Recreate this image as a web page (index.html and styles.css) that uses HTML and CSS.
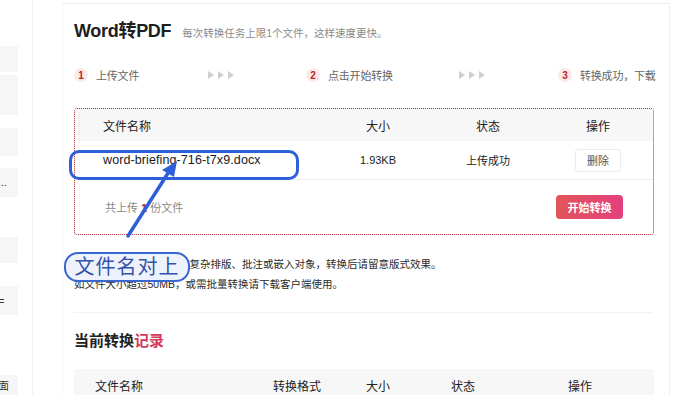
FILE: index.html
```html
<!DOCTYPE html>
<html lang="zh-CN">
<head>
<meta charset="utf-8">
<title>Word转PDF</title>
<link rel="stylesheet" href="styles.css">
</head>
<body>
<div class="page">
  <aside class="sidebar">
    <div class="sb-item sb-a"></div>
    <div class="sb-item sb-b"></div>
    <div class="sb-item sb-c"></div>
    <div class="sb-item sb-d"><span>...</span></div>
    <div class="sb-item sb-e"></div>
    <div class="sb-item sb-f"><span>=</span></div>
    <div class="sb-item sb-g"><span>面</span></div>
  </aside>
  <main class="card">
    <header class="head">
      <h1 class="title">Word转PDF</h1>
      <span class="subtitle">每次转换任务上限1个文件，这样速度更快。</span>
    </header>
    <div class="steps">
      <div class="step"><span class="num">1</span><span class="step-text">上传文件</span></div>
      <svg class="arrows" width="26" height="8" viewBox="0 0 26 8"><polygon points="0,0 6,4 0,8" /><polygon points="10,0 16,4 10,8" /><polygon points="20,0 26,4 20,8" /></svg>
      <div class="step"><span class="num">2</span><span class="step-text">点击开始转换</span></div>
      <svg class="arrows" width="26" height="8" viewBox="0 0 26 8"><polygon points="0,0 6,4 0,8" /><polygon points="10,0 16,4 10,8" /><polygon points="20,0 26,4 20,8" /></svg>
      <div class="step"><span class="num">3</span><span class="step-text">转换成功，下载</span></div>
    </div>
    <section class="upload">
      <div class="trow thead">
        <div class="c1">文件名称</div>
        <div class="cc">大小</div>
        <div class="cc">状态</div>
        <div class="cc">操作</div>
      </div>
      <div class="trow tbody">
        <div class="c1 fname">word-briefing-716-t7x9.docx</div>
        <div class="cc">1.93KB</div>
        <div class="cc">上传成功</div>
        <div class="cc"><button class="del">删除</button></div>
      </div>
      <div class="foot">
        <span class="count">共上传 <em>1</em> 份文件</span>
        <button class="start">开始转换</button>
      </div>
    </section>
    <div class="notes">
      <p>注意：若您的文件中含有复杂排版、批注或嵌入对象，转换后请留意版式效果。</p>
      <p>如文件大小超过50MB，或需批量转换请下载客户端使用。</p>
    </div>
    <h2 class="rec-title">当前转换<span class="hl">记录</span></h2>
    <div class="rec-head">
      <div>文件名称</div>
      <div>转换格式</div>
      <div>大小</div>
      <div>状态</div>
      <div>操作</div>
    </div>
  </main>
</div>

<div class="anno-box"></div>
<svg class="anno-arrow" width="700" height="395" viewBox="0 0 700 395">
  <line x1="128" y1="236" x2="170" y2="170" stroke="#2d5fd8" stroke-width="3.5" stroke-linecap="round"/>
  <polygon points="177,161 162,170 174,177" fill="#2d5fd8"/>
</svg>
<div class="anno-label">文件名对上</div>
</body>
</html>
```

FILE: styles.css
```css
* { box-sizing: border-box; }
html, body { margin: 0; padding: 0; background: #fff; }
body {
  font-family: "Liberation Sans", "Noto Sans CJK SC", sans-serif;
  color: #333;
  width: 700px;
  height: 395px;
  overflow: hidden;
  position: relative;
}
.page {
  display: flex;
  align-items: flex-start;
}
.sidebar {
  width: 33px;
  height: 395px;
  border-right: 1px solid #f0f0f0;
  display: flex;
  flex-direction: column;
  flex-shrink: 0;
}
.sb-item {
  width: 18px;
  background: #f6f6f6;
  font-size: 11px;
  color: #333;
  display: flex;
  align-items: center;
  overflow: hidden;
  white-space: nowrap;
}
.sb-a { margin-top: 46px; height: 27px; }
.sb-b { margin-top: 3px; height: 41px; }
.sb-c { margin-top: 13px; height: 28px; }
.sb-d { margin-top: 12px; height: 30px; }
.sb-d span { margin-left: -2px; }
.sb-e { margin-top: 40px; height: 27px; }
.sb-f { margin-top: 23px; height: 30px; }
.sb-f span { margin-left: -2px; }
.sb-g { margin-top: 60px; height: 20px; }
.sb-g span { margin-left: -2px; }

.card {
  margin-left: 29px;
  margin-top: 3px;
  width: 608px;
  height: 400px;
  border-top: 1px solid #efefef;
  border-left: 1px solid #f6f6f6;
  border-right: 1px solid #efefef;
  padding: 12px 16px 0 11px;
}
.head {
  display: flex;
  align-items: baseline;
  height: 28px;
}
.title {
  margin: 0;
  font-size: 18px;
  font-weight: bold;
  color: #1e1e1e;
  letter-spacing: -0.3px;
}
.subtitle {
  margin-left: 11px;
  font-size: 10.5px;
  color: #8a8a8a;
}
.steps {
  margin-top: 21px;
  height: 20px;
  display: grid;
  grid-template-columns: 134px 98px 153px 99px auto;
  align-items: center;
  font-size: 11px;
  color: #666;
  white-space: nowrap;
}
.step { display: flex; align-items: center; }
.num {
  width: 14px;
  height: 14px;
  border-radius: 50%;
  background: #fde9e7;
  color: #b7252d;
  font-weight: bold;
  font-size: 10px;
  display: flex;
  align-items: center;
  justify-content: center;
  margin-right: 8px;
}
.step-text { letter-spacing: -0.2px; }
.arrows { fill: #cfcfcf; }
.upload {
  margin-top: 23px;
  margin-left: 0;
  width: 580px;
  height: 127px;
  border: 1px dotted #b4232f;
  border-radius: 3px;
  font-size: 11px;
  color: #222;
}
.trow {
  display: grid;
  grid-template-columns: 260px 86px 134px 86px;
  align-items: center;
}
.thead {
  height: 32px;
  background: #f7f7f7;
  font-size: 12px;
}
.tbody {
  height: 39px;
  border-bottom: 1px solid #efefef;
}
.c1 { padding-left: 28px; }
.cc { text-align: center; }
.fname { font-size: 12.5px; color: #1a1a1a; letter-spacing: 0.1px; }
.del {
  font-family: inherit;
  width: 46px;
  height: 23px;
  border: 1px solid #ececec;
  background: #fff;
  border-radius: 3px;
  font-size: 11px;
  color: #555;
  padding: 0;
}
.foot {
  height: 54px;
  display: flex;
  align-items: center;
  justify-content: space-between;
  padding: 0 30px 0 30px;
}
.count { color: #888; font-size: 11px; }
.count em { font-style: normal; color: #b7252d; font-weight: bold; }
.start {
  font-family: inherit;
  width: 67px;
  height: 24px;
  border: none;
  border-radius: 4px;
  background: linear-gradient(90deg, #e25559, #e3407e);
  color: #fff;
  font-weight: bold;
  font-size: 11px;
  padding: 0;
}
.notes {
  margin-top: 19px;
  font-size: 10.5px;
  color: #2a2a2a;
  padding-bottom: 18px;
  border-bottom: 1px solid #f3f3f3;
  white-space: nowrap;
}
.notes p { margin: 0; line-height: 20px; }
.rec-title {
  margin: 18px 0 0 0;
  font-size: 15px;
  font-weight: bold;
  color: #222;
  line-height: 20px;
}
.hl { color: #d43a5c; }
.rec-head {
  margin-top: 18px;
  width: 580px;
  height: 32px;
  background: #f7f7f7;
  display: grid;
  grid-template-columns: 178px 93px 85px 117px 1fr;
  align-items: center;
  padding-left: 21px;
  font-size: 12px;
  color: #222;
}

.anno-box {
  position: absolute;
  left: 69px;
  top: 150px;
  width: 230px;
  height: 30px;
  border: 3px solid #2d5fd8;
  border-radius: 10px;
}
.anno-arrow {
  position: absolute;
  left: 0;
  top: 0;
}
.anno-label {
  position: absolute;
  left: 64px;
  top: 252px;
  width: 126px;
  height: 30px;
  border: 2px solid #3a66d0;
  border-radius: 14px;
  background: #eef2fd;
  color: #3452a8;
  font-size: 20px;
  line-height: 26px;
  text-align: center;
  letter-spacing: 1px;
}
```
